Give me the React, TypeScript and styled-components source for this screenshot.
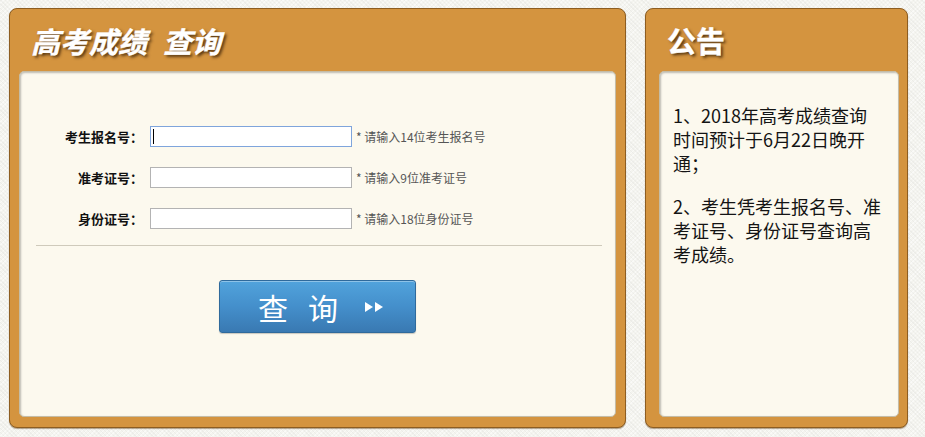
import React from 'react';
import styled, { createGlobalStyle } from 'styled-components';

const GlobalStyle = createGlobalStyle`
  html, body {
    margin: 0;
    padding: 0;
  }
  body {
    width: 925px;
    height: 437px;
    overflow: hidden;
    font-family: "Noto Sans CJK SC", "Liberation Sans", sans-serif;
    background-color: #f4f4ef;
    background-image:
      repeating-linear-gradient(45deg, rgba(0, 0, 0, 0.03) 0 1px, transparent 1px 3px),
      repeating-linear-gradient(-45deg, rgba(255, 255, 255, 0.5) 0 1px, transparent 1px 3px);
  }
`;

const Page = styled.div`
  display: flex;
  align-items: flex-start;
  gap: 19px;
  padding: 8px 0 0 9px;
`;

const Panel = styled.section<{ $width: number; $padLeft: number; $padRight: number }>`
  box-sizing: border-box;
  width: ${p => p.$width}px;
  height: 420px;
  display: flex;
  flex-direction: column;
  padding: 0 ${p => p.$padRight}px 10px ${p => p.$padLeft}px;
  background: #d4943f;
  border: 1px solid #8d5d21;
  border-radius: 8px;
  box-shadow: 0 1px 1px rgba(90, 55, 10, 0.45);
`;

const PanelHeader = styled.div<{ $indent: number }>`
  height: 62px;
  display: flex;
  align-items: center;
  padding-left: ${p => p.$indent}px;
`;

const Title = styled.h2<{ $italic?: boolean }>`
  margin: 0;
  font-size: 29px;
  font-weight: 700;
  line-height: 1;
  color: #fff;
  font-style: ${p => (p.$italic ? 'italic' : 'normal')};
  text-shadow: 2px 2px 3px rgba(40, 20, 0, 0.75);
  -webkit-text-stroke: 0.4px #fff;
`;

const TitleGap = styled.span`
  margin-left: 16px;
`;

const Inner = styled.div`
  flex: 1;
  box-sizing: border-box;
  background: #fcf9ee;
  border: 1px solid #c4bca6;
  border-radius: 5px;
  box-shadow: inset 1px 1px 2px rgba(0, 0, 0, 0.25);
`;

const Form = styled.div`
  display: flex;
  flex-direction: column;
  padding: 54px 0 0;
`;

const Rows = styled.div`
  display: grid;
  grid-template-columns: 123px 202px auto;
  column-gap: 7px;
  row-gap: 20px;
  align-items: center;
`;

const Label = styled.label`
  text-align: right;
  font-size: 13px;
  font-weight: 700;
  color: #111;
  white-space: nowrap;
`;

const Field = styled.div`
  position: relative;
  display: flex;
`;

const Input = styled.input<{ $focused?: boolean }>`
  box-sizing: border-box;
  width: 202px;
  height: 21px;
  margin: 0;
  padding: 0 3px;
  border: 1px solid ${p => (p.$focused ? '#7fa5dc' : '#b3b3b3')};
  background: #fff;
  outline: none;
  font-size: 13px;
`;

const Caret = styled.span`
  position: absolute;
  left: 3px;
  top: 3px;
  width: 1px;
  height: 15px;
  background: #000;
`;

const Hint = styled.span`
  margin-left: -3px;
  font-size: 12px;
  color: #555;
  white-space: nowrap;
`;

const Divider = styled.hr`
  margin: 16px 13px 0 16px;
  border: 0;
  border-top: 1px solid #cfcabb;
`;

const SubmitRow = styled.div`
  display: flex;
  justify-content: center;
  padding-top: 34px;
`;

const SubmitButton = styled.button`
  box-sizing: border-box;
  width: 197px;
  height: 53px;
  display: flex;
  align-items: center;
  padding: 0 0 0 38px;
  border: 1px solid #2f6a9c;
  border-radius: 3px;
  background: linear-gradient(to bottom, #51a3dc 0%, #448fcb 50%, #3979b2 100%);
  box-shadow: inset 0 1px 0 rgba(255, 255, 255, 0.35), 0 1px 1px rgba(0, 0, 0, 0.2);
  color: #fff;
  font-family: "Noto Sans CJK SC", sans-serif;
  font-size: 30px;
  font-weight: 400;
  cursor: pointer;
`;

const ButtonChar = styled.span<{ $gap: number }>`
  margin-right: ${p => p.$gap}px;
  line-height: 1;
`;

const Notice = styled.div`
  padding: 31px 10px 0 13px;
  font-size: 18px;
  line-height: 24px;
  color: #141414;
`;

const NoticeItem = styled.p`
  margin: 0 0 19px;
  white-space: nowrap;
`;

const fields = [
  { label: '考生报名号：', hint: '* 请输入14位考生报名号', focused: true },
  { label: '准考证号：', hint: '* 请输入9位准考证号' },
  { label: '身份证号：', hint: '* 请输入18位身份证号' },
];

const Arrows: React.FC = () => (
  <svg width="20" height="12" viewBox="0 0 20 12" aria-hidden="true">
    <path d="M1 1 L9 6 L1 11 Z" fill="#fff" />
    <path d="M11 1 L19 6 L11 11 Z" fill="#fff" />
  </svg>
);

const App: React.FC = () => {
  return (
    <>
      <GlobalStyle />
      <Page>
        <Panel $width={617} $padLeft={9} $padRight={9}>
          <PanelHeader $indent={12}>
            <Title $italic>
              高考成绩<TitleGap>查询</TitleGap>
            </Title>
          </PanelHeader>
          <Inner>
            <Form>
              <Rows>
                {fields.map(f => (
                  <React.Fragment key={f.label}>
                    <Label>{f.label}</Label>
                    <Field>
                      <Input type="text" $focused={f.focused} />
                      {f.focused && <Caret />}
                    </Field>
                    <Hint>{f.hint}</Hint>
                  </React.Fragment>
                ))}
              </Rows>
              <Divider />
              <SubmitRow>
                <SubmitButton type="button">
                  <ButtonChar $gap={20}>查</ButtonChar>
                  <ButtonChar $gap={26}>询</ButtonChar>
                  <Arrows />
                </SubmitButton>
              </SubmitRow>
            </Form>
          </Inner>
        </Panel>
        <Panel $width={263} $padLeft={13} $padRight={8}>
          <PanelHeader $indent={8}>
            <Title>公告</Title>
          </PanelHeader>
          <Inner>
            <Notice>
              <NoticeItem>
                1、2018年高考成绩查询
                <br />
                时间预计于6月22日晚开
                <br />
                通；
              </NoticeItem>
              <NoticeItem>
                2、考生凭考生报名号、准
                <br />
                考证号、身份证号查询高
                <br />
                考成绩。
              </NoticeItem>
            </Notice>
          </Inner>
        </Panel>
      </Page>
    </>
  );
};

export default App;
